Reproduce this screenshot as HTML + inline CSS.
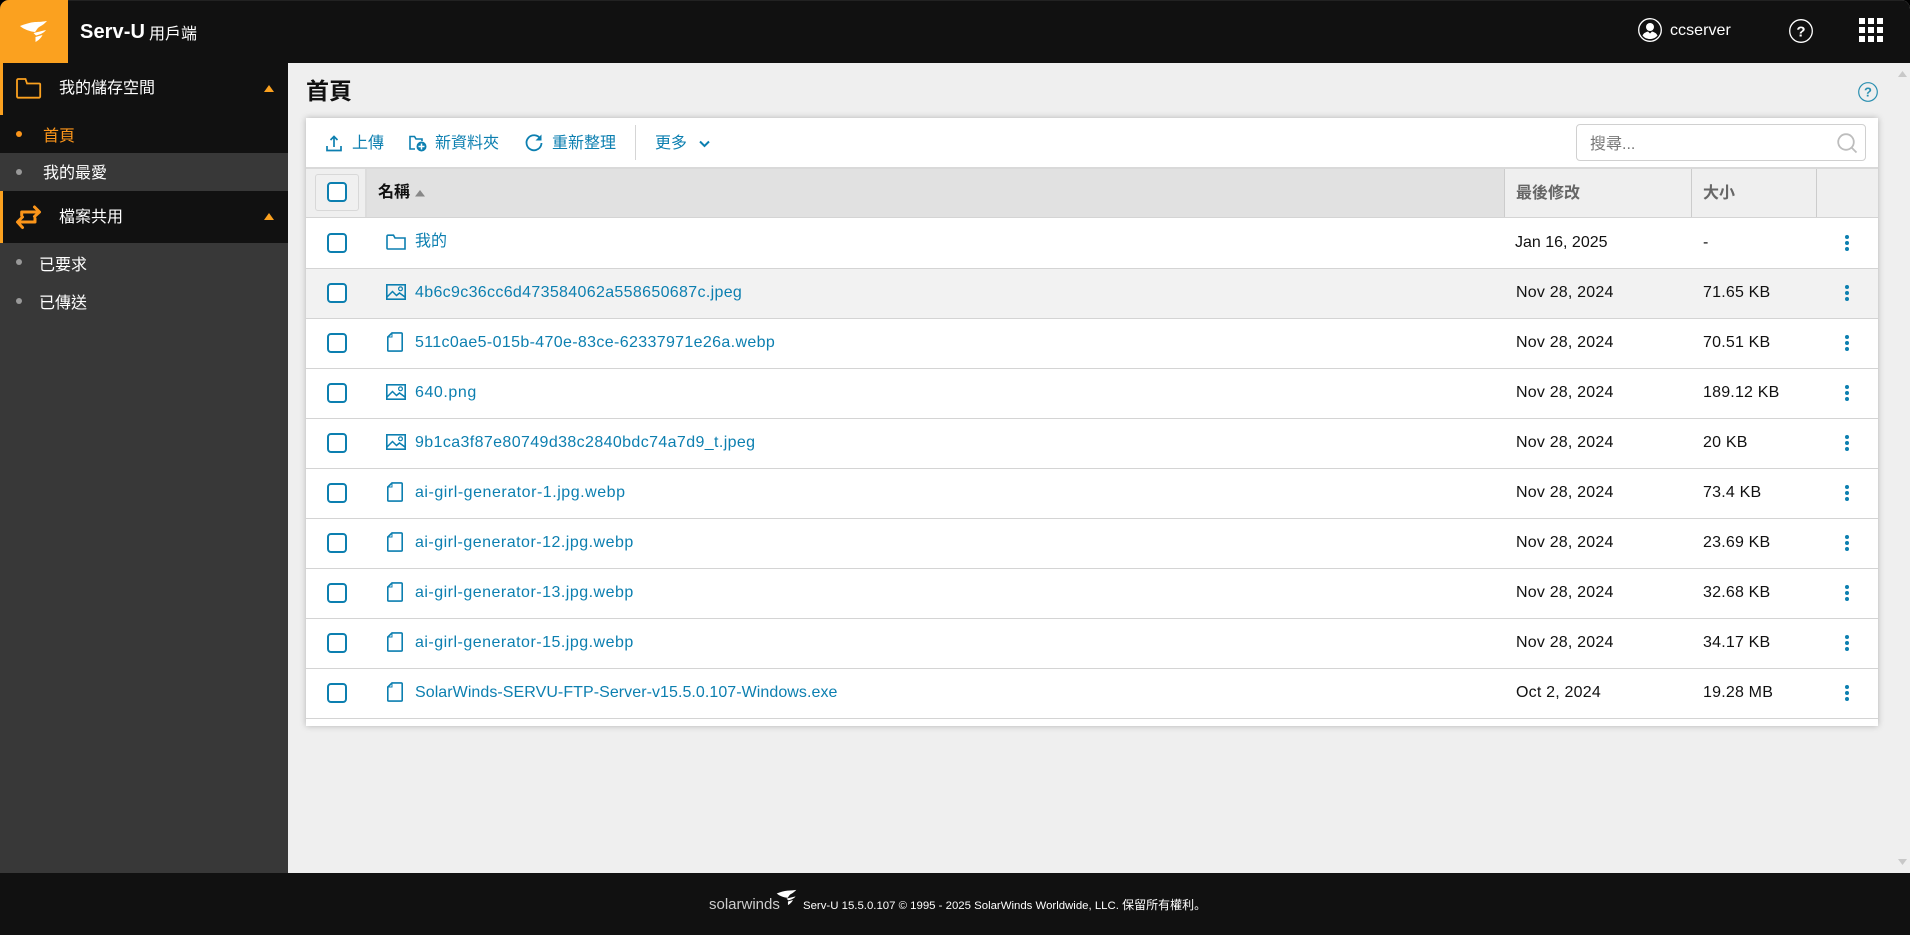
<!DOCTYPE html>
<html lang="zh-Hant"><head><meta charset="utf-8"><title>Serv-U</title>
<style>
html,body{margin:0;padding:0;width:1910px;height:935px;overflow:hidden;background:#000}
*{box-sizing:border-box}
body{font-family:"Liberation Sans","Noto Sans CJK TC",sans-serif;font-size:16px;color:#111;position:relative}
#app{position:absolute;inset:0;background:#efefef;border-radius:9px 9px 0 0;overflow:hidden}
.a{position:absolute;white-space:nowrap}
.t{line-height:20px;height:20px}
svg{position:absolute;overflow:visible}
.w{color:#fff}
.l{color:#0c7fb0}
.d{letter-spacing:.2px}
.cb{position:absolute;left:327px;width:20px;height:20px;border:2px solid #0c7fb0;border-radius:4px;background:#fff}
.rw{position:absolute;left:306px;width:1572px;height:50px;background:#fff;border-bottom:1px solid #d4d4d4}
.dot{position:absolute;left:1845px;width:4px;height:4px;border-radius:50%;background:#0c7fb0}
</style></head><body><div id="app">
<svg width="0" height="0" style="position:absolute"><defs>
<symbol id="fo" viewBox="0 0 20 16"><path d="M1 3V14a1 1 0 0 0 1 1H19V4H9L7.500 1.200H2A1 1 0 0 0 1 2.200Z" fill="none" stroke="#0c7fb0" stroke-width="1.600"/></symbol>
<symbol id="im" viewBox="0 0 20 16"><rect x=".8" y=".8" width="18.400" height="14.400" fill="none" stroke="#0c7fb0" stroke-width="1.600"/><path d="M1 13L6.500 7.500L10.500 11.500L13.500 9L19 13" fill="none" stroke="#0c7fb0" stroke-width="1.500"/><circle cx="14.500" cy="4.800" r="1.900" fill="none" stroke="#0c7fb0" stroke-width="1.200"/></symbol>
<symbol id="fi" viewBox="0 0 16 20"><path d="M5 .9H14.200a1 1 0 0 1 1 1V18.100a1 1 0 0 1-1 1H1.800a1 1 0 0 1-1-1V5Z" fill="none" stroke="#0c7fb0" stroke-width="1.600"/><path d="M5 1.500V5H1.200" fill="none" stroke="#0c7fb0" stroke-width="1"/></symbol>
<symbol id="sw" viewBox="0 0 29 23"><path d="M1 6C6 4 11 2.500 16 2C20 2 25 1.500 28 1C26 3 24 5 21 6.500C18 8 18 10 16 12C11 11.500 5 9.500 1 6Z M14.500 13L27 10C25 13 21 14.500 17 15.500Z M16.500 17L23.500 15C22 18 20 20 16.500 22Z" fill="#fff"/></symbol>
</defs></svg>

<!-- header -->
<div class="a" style="left:0;top:0;width:1910px;height:63px;background:#111;border-top:1px solid #222"></div>
<div class="a" style="left:0;top:0;width:68px;height:63px;background:#fba11f"></div>
<svg style="left:19px;top:20px" width="29" height="23"><use href="#sw" width="29" height="23"/></svg>
<div class="a w" style="left:80px;top:20px;line-height:24px;font-size:20px;font-weight:bold;letter-spacing:.1px">Serv-U</div>
<div class="a w t" style="left:149px;top:25px">用戶端</div>

<svg style="left:1638px;top:18px" width="24" height="24" viewBox="0 0 24 24"><circle cx="12" cy="12" r="11.300" fill="none" stroke="#fff" stroke-width="1.300"/><circle cx="12" cy="9" r="4" fill="#fff"/><path d="M4.500 17.500C6 14.500 8.500 14 10 13.500L12 15.500L14 13.500C15.500 14 18 14.500 19.500 17.500C17.500 20 15 21 12 21C9 21 6.500 20 4.500 17.500Z" fill="#fff"/></svg>
<div class="a w t" style="left:1670px;top:21px;letter-spacing:.05px">ccserver</div>
<svg style="left:1789px;top:19px" width="24" height="24" viewBox="0 0 24 24"><circle cx="12" cy="12" r="11.300" fill="none" stroke="#fff" stroke-width="1.300"/><text x="12" y="17.500" text-anchor="middle" font-family="Liberation Sans" font-weight="bold" font-size="15" fill="#fff">?</text></svg>
<svg style="left:1859px;top:18px" width="24" height="24"><path fill="#fff" d="M0 0h6v6H0zM9 0h6v6H9zM18 0h6v6h-6zM0 9h6v6H0zM9 9h6v6H9zM18 9h6v6h-6zM0 18h6v6H0zM9 18h6v6H9zM18 18h6v6h-6z"/></svg>

<!-- sidebar -->
<div class="a" style="left:0;top:63px;width:288px;height:810px;background:#383838"></div>
<div class="a" style="left:0;top:63px;width:288px;height:90px;background:#111"></div>
<div class="a" style="left:0;top:191px;width:288px;height:52px;background:#111"></div>
<div class="a" style="left:0;top:63px;width:3px;height:52px;background:#fba11f"></div>
<div class="a" style="left:0;top:191px;width:3px;height:52px;background:#fba11f"></div>
<svg style="left:16px;top:78px" width="25" height="21" viewBox="0 0 25 21"><path d="M1 3V18.500a1.200 1.200 0 0 0 1.200 1.200H23a1.200 1.200 0 0 0 1.200-1.200V6.500a1 1 0 0 0-1-1H11L9.500 1H2.200A1.200 1.200 0 0 0 1 2.200Z" fill="none" stroke="#fba11f" stroke-width="1.800"/></svg>
<div class="a w t" style="left:59px;top:79px">我的儲存空間</div>
<svg style="left:264px;top:85px" width="10" height="7"><path d="M5 0L10 7H0Z" fill="#fba11f"/></svg>
<div class="a" style="left:16px;top:131px;width:6px;height:6px;border-radius:50%;background:#fb951a"></div>
<div class="a t" style="left:43px;top:127px;color:#fb951a">首頁</div>
<div class="a" style="left:16px;top:169px;width:6px;height:6px;border-radius:50%;background:#999"></div>
<div class="a w t" style="left:43px;top:164px">我的最愛</div>
<svg style="left:16px;top:204px" width="25" height="27" viewBox="0 0 25 27"><path d="M5.700 11.500V8H23M18.500 3L23.500 8L18.500 12.500M19 14.500V18H2M6.500 13L1.500 18L6.500 23.500" fill="none" stroke="#fb951a" stroke-width="3" stroke-linecap="round" stroke-linejoin="round"/></svg>
<div class="a w t" style="left:59px;top:208px">檔案共用</div>
<svg style="left:264px;top:213px" width="10" height="7"><path d="M5 0L10 7H0Z" fill="#fba11f"/></svg>
<div class="a" style="left:16px;top:259px;width:6px;height:6px;border-radius:50%;background:#999"></div>
<div class="a w t" style="left:39px;top:256px">已要求</div>
<div class="a" style="left:16px;top:298px;width:6px;height:6px;border-radius:50%;background:#999"></div>
<div class="a w t" style="left:39px;top:294px">已傳送</div>

<!-- title -->
<div class="a" style="left:306px;top:76px;font-size:23px;line-height:30px;font-weight:bold;color:#111">首頁</div>
<svg style="left:1858px;top:82px" width="20" height="20" viewBox="0 0 20 20"><circle cx="10" cy="10" r="9.300" fill="none" stroke="#2a8fb0" stroke-width="1.200"/><text x="10" y="14.500" text-anchor="middle" font-family="Liberation Sans" font-weight="bold" font-size="13" fill="#2a8fb0">?</text></svg>
<svg style="left:1897px;top:71px" width="12" height="7"><path d="M5.500 0L10 6H1Z" fill="#c8c8c8"/></svg>
<svg style="left:1897px;top:859px" width="12" height="7"><path d="M1 0H10L5.500 6Z" fill="#c8c8c8"/></svg>

<!-- panel -->
<div class="a" style="left:306px;top:118px;width:1572px;height:608px;background:#fff;box-shadow:0 0 6px rgba(0,0,0,.25)"></div>
<svg style="left:326px;top:135px" width="16" height="17" viewBox="0 0 16 17"><path d="M8 12V1.500M4.500 5L8 1.500L11.500 5M1 11V15.500H15V11" fill="none" stroke="#0c7fb0" stroke-width="1.700"/></svg>
<div class="a l t" style="left:352px;top:134px">上傳</div>
<svg style="left:409px;top:135px" width="18" height="17" viewBox="0 0 18 17"><path d="M6 14H1V1.500H5.500L7 4H13V6" fill="none" stroke="#0c7fb0" stroke-width="1.600"/><circle cx="12.500" cy="11.500" r="5" fill="#0c7fb0"/><path d="M12.500 8.500v6M9.500 11.500h6" stroke="#fff" stroke-width="1.500"/></svg>
<div class="a l t" style="left:435px;top:134px">新資料夾</div>
<svg style="left:525px;top:134px" width="18" height="18" viewBox="0 0 18 18"><path d="M15.500 5A7.500 7.500 0 1 0 16.500 9" fill="none" stroke="#0c7fb0" stroke-width="1.800"/><path d="M16.500 0.500V6.500H10.500Z" fill="#0c7fb0"/></svg>
<div class="a l t" style="left:552px;top:134px">重新整理</div>
<div class="a" style="left:635px;top:125px;width:1px;height:35px;background:#d5d5d5"></div>
<div class="a l t" style="left:655px;top:134px">更多</div>
<svg style="left:699px;top:140px" width="11" height="8" viewBox="0 0 11 8"><path d="M1 1.500L5.500 6L10 1.500" fill="none" stroke="#0c7fb0" stroke-width="2"/></svg>
<div class="a" style="left:1576px;top:124px;width:290px;height:37px;border:1px solid #d0d0d0;border-radius:4px;background:#fff"></div>
<div class="a t" style="left:1590px;top:135px;color:#777">搜尋...</div>
<svg style="left:1837px;top:133px" width="20" height="20" viewBox="0 0 20 20"><circle cx="9" cy="9" r="7.800" fill="none" stroke="#bdbdbd" stroke-width="1.800"/><path d="M14.500 14.500L19.500 19.500" stroke="#bdbdbd" stroke-width="1.800"/></svg>

<!-- table header -->
<div class="a" style="left:306px;top:167px;width:1572px;height:2px;background:#d9d9d9"></div>
<div class="a" style="left:306px;top:169px;width:1572px;height:49px;background:#efefef;border-bottom:1px solid #d4d4d4"></div>
<div class="a" style="left:366px;top:169px;width:1138px;height:48px;background:#e1e1e1"></div>
<div class="a" style="left:365px;top:169px;width:2px;height:48px;background:#dcdcdc"></div>
<div class="a" style="left:1504px;top:169px;width:1px;height:48px;background:#ccc"></div>
<div class="a" style="left:1691px;top:169px;width:1px;height:48px;background:#ccc"></div>
<div class="a" style="left:1816px;top:169px;width:1px;height:48px;background:#ccc"></div>
<div class="a" style="left:315px;top:174px;width:44px;height:37px;border:1px solid #d8d8d8;border-radius:3px;background:#f0f0f0"></div>
<div class="cb" style="top:182px"></div>
<div class="a t" style="left:378px;top:183px;font-weight:bold;color:#111">名稱</div>
<svg style="left:415px;top:190px" width="10" height="7"><path d="M5 0L10 6.500H0Z" fill="#888"/></svg>
<div class="a t" style="left:1516px;top:184px;font-weight:bold;color:#666">最後修改</div>
<div class="a t" style="left:1703px;top:184px;font-weight:bold;color:#666">大小</div>

<!-- rows -->
<div class="rw" style="top:219px"></div>
<div class="rw" style="top:269px;background:#f2f2f2"></div>
<div class="rw" style="top:319px"></div>
<div class="rw" style="top:369px"></div>
<div class="rw" style="top:419px"></div>
<div class="rw" style="top:469px"></div>
<div class="rw" style="top:519px"></div>
<div class="rw" style="top:569px"></div>
<div class="rw" style="top:619px"></div>
<div class="rw" style="top:669px"></div>
<div class="a" style="left:306px;top:719px;width:1572px;height:7px;background:#fff"></div>

<div class="cb" style="top:233px"></div>
<svg style="left:386px;top:234px" width="20" height="16"><use href="#fo" width="20" height="16"/></svg>
<div class="a l t" style="left:415px;top:232px">我的</div>
<div class="a t" style="left:1515px;top:233px">Jan 16, 2025</div>
<div class="a d t" style="left:1703px;top:233px">-</div>
<div class="dot" style="top:235px"></div><div class="dot" style="top:241px"></div><div class="dot" style="top:247px"></div>

<div class="cb" style="top:283px"></div>
<svg style="left:386px;top:284px" width="20" height="16"><use href="#im" width="20" height="16"/></svg>
<div class="a l t" style="left:415px;top:283px;letter-spacing:.33px">4b6c9c36cc6d473584062a558650687c.jpeg</div>
<div class="a d t" style="left:1516px;top:283px">Nov 28, 2024</div>
<div class="a d t" style="left:1703px;top:283px">71.65 KB</div>
<div class="dot" style="top:285px"></div><div class="dot" style="top:291px"></div><div class="dot" style="top:297px"></div>

<div class="cb" style="top:333px"></div>
<svg style="left:387px;top:332px" width="16" height="20"><use href="#fi" width="16" height="20"/></svg>
<div class="a l t" style="left:415px;top:333px;letter-spacing:.35px">511c0ae5-015b-470e-83ce-62337971e26a.webp</div>
<div class="a d t" style="left:1516px;top:333px">Nov 28, 2024</div>
<div class="a d t" style="left:1703px;top:333px">70.51 KB</div>
<div class="dot" style="top:335px"></div><div class="dot" style="top:341px"></div><div class="dot" style="top:347px"></div>

<div class="cb" style="top:383px"></div>
<svg style="left:386px;top:384px" width="20" height="16"><use href="#im" width="20" height="16"/></svg>
<div class="a l t" style="left:415px;top:383px;letter-spacing:.57px">640.png</div>
<div class="a d t" style="left:1516px;top:383px">Nov 28, 2024</div>
<div class="a d t" style="left:1703px;top:383px">189.12 KB</div>
<div class="dot" style="top:385px"></div><div class="dot" style="top:391px"></div><div class="dot" style="top:397px"></div>

<div class="cb" style="top:433px"></div>
<svg style="left:386px;top:434px" width="20" height="16"><use href="#im" width="20" height="16"/></svg>
<div class="a l t" style="left:415px;top:433px;letter-spacing:.38px">9b1ca3f87e80749d38c2840bdc74a7d9_t.jpeg</div>
<div class="a d t" style="left:1516px;top:433px">Nov 28, 2024</div>
<div class="a d t" style="left:1703px;top:433px">20 KB</div>
<div class="dot" style="top:435px"></div><div class="dot" style="top:441px"></div><div class="dot" style="top:447px"></div>

<div class="cb" style="top:483px"></div>
<svg style="left:387px;top:482px" width="16" height="20"><use href="#fi" width="16" height="20"/></svg>
<div class="a l t" style="left:415px;top:483px;letter-spacing:.53px">ai-girl-generator-1.jpg.webp</div>
<div class="a d t" style="left:1516px;top:483px">Nov 28, 2024</div>
<div class="a d t" style="left:1703px;top:483px">73.4 KB</div>
<div class="dot" style="top:485px"></div><div class="dot" style="top:491px"></div><div class="dot" style="top:497px"></div>

<div class="cb" style="top:533px"></div>
<svg style="left:387px;top:532px" width="16" height="20"><use href="#fi" width="16" height="20"/></svg>
<div class="a l t" style="left:415px;top:533px;letter-spacing:.49px">ai-girl-generator-12.jpg.webp</div>
<div class="a d t" style="left:1516px;top:533px">Nov 28, 2024</div>
<div class="a d t" style="left:1703px;top:533px">23.69 KB</div>
<div class="dot" style="top:535px"></div><div class="dot" style="top:541px"></div><div class="dot" style="top:547px"></div>

<div class="cb" style="top:583px"></div>
<svg style="left:387px;top:582px" width="16" height="20"><use href="#fi" width="16" height="20"/></svg>
<div class="a l t" style="left:415px;top:583px;letter-spacing:.49px">ai-girl-generator-13.jpg.webp</div>
<div class="a d t" style="left:1516px;top:583px">Nov 28, 2024</div>
<div class="a d t" style="left:1703px;top:583px">32.68 KB</div>
<div class="dot" style="top:585px"></div><div class="dot" style="top:591px"></div><div class="dot" style="top:597px"></div>

<div class="cb" style="top:633px"></div>
<svg style="left:387px;top:632px" width="16" height="20"><use href="#fi" width="16" height="20"/></svg>
<div class="a l t" style="left:415px;top:633px;letter-spacing:.49px">ai-girl-generator-15.jpg.webp</div>
<div class="a d t" style="left:1516px;top:633px">Nov 28, 2024</div>
<div class="a d t" style="left:1703px;top:633px">34.17 KB</div>
<div class="dot" style="top:635px"></div><div class="dot" style="top:641px"></div><div class="dot" style="top:647px"></div>

<div class="cb" style="top:683px"></div>
<svg style="left:387px;top:682px" width="16" height="20"><use href="#fi" width="16" height="20"/></svg>
<div class="a l t" style="left:415px;top:683px;letter-spacing:.06px">SolarWinds-SERVU-FTP-Server-v15.5.0.107-Windows.exe</div>
<div class="a d t" style="left:1516px;top:683px">Oct 2, 2024</div>
<div class="a d t" style="left:1703px;top:683px">19.28 MB</div>
<div class="dot" style="top:685px"></div><div class="dot" style="top:691px"></div><div class="dot" style="top:697px"></div>

<!-- footer -->
<div class="a" style="left:0;top:873px;width:1910px;height:62px;background:#111"></div>
<div class="a" style="left:709px;top:895px;font-size:15px;line-height:20px;color:#ccc">solarwinds</div>
<svg style="left:776px;top:889px" width="21" height="17"><use href="#sw" width="21" height="17"/></svg>
<div class="a w" style="left:803px;top:896px;font-size:11.400px;line-height:18px">Serv-U 15.5.0.107 © 1995 - 2025 SolarWinds Worldwide, LLC. <span lang="zh-CN" style="font-size:12px;font-family:'Liberation Sans','Noto Sans CJK SC',sans-serif">保留所有權利。</span></div>
</div></body></html>
